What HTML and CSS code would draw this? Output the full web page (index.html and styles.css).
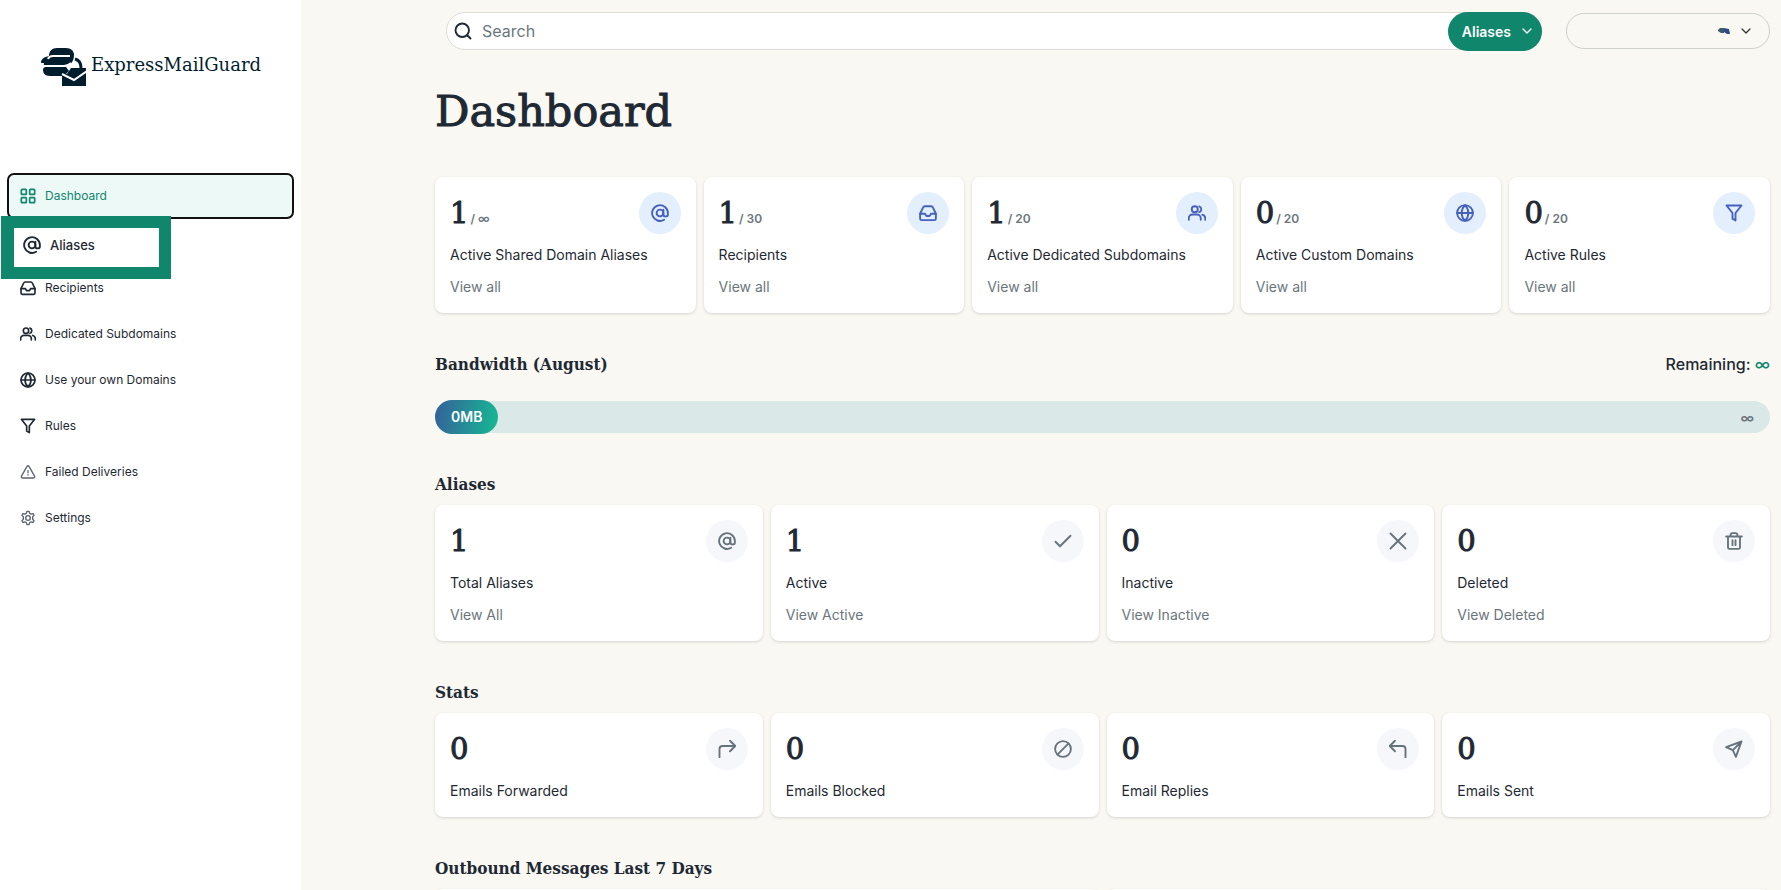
FILE: index.html
```html
<!DOCTYPE html>
<html lang="en">

<head>
    <meta charset="UTF-8">
    <title>Dashboard - ExpressMailGuard</title>
    <link rel="stylesheet" href="styles.css">
</head>

<body>
    <!-- Shared icons -->
    <svg class="sprite" aria-hidden="true">
        <symbol id="i-grid" viewBox="0 0 24 24">
            <rect x="2" y="2" width="7.5" height="7.5" rx="1" />
            <rect x="14.5" y="2" width="7.5" height="7.5" rx="1" />
            <rect x="2" y="14.5" width="7.5" height="7.5" rx="1" />
            <rect x="14.5" y="14.5" width="7.5" height="7.5" rx="1" />
        </symbol>
        <symbol id="i-at" viewBox="0 0 24 24">
            <circle cx="12" cy="12" r="4.5" />
            <path d="M16.5 7.5v6a3 3 0 0 0 6 0V12a10.5 10.5 0 1 0-5 9" />
        </symbol>
        <symbol id="i-inbox" viewBox="0 0 24 24">
            <path d="M22.5 13H16l-2 3h-4l-2-3H1.500" />
            <path d="M5.500 4.500L1.500 13v6.500a2 2 0 0 0 2 2h17a2 2 0 0 0 2-2V13l-4-8.500a2.500 2.500 0 0 0-2.200-1.500H7.700a2.500 2.500 0 0 0-2.200 1.500z" />
        </symbol>
        <symbol id="i-users" viewBox="0 0 24 24">
            <path d="M17 21v-2a5 5 0 0 0-5-5H6a5 5 0 0 0-5 5v2" />
            <circle cx="9" cy="7" r="4" />
            <path d="M23 21v-2a5 5 0 0 0-4-4.800M15 3.200a4 4 0 0 1 0 7.600" />
        </symbol>
        <symbol id="i-globe" viewBox="0 0 24 24">
            <circle cx="12" cy="12" r="10.500" />
            <path d="M1.500 12h21M12 1.500c-6 6-6 15 0 21c6-6 6-15 0-21z" />
        </symbol>
        <symbol id="i-filter" viewBox="0 0 24 24">
            <path d="M22 2H2l8 10v7.500l4 2.500V12z" />
        </symbol>
        <symbol id="i-alert" viewBox="0 0 24 24">
            <path d="M10.500 3.500L2 18.500a2 2 0 0 0 1.700 2.500h16.600a2 2 0 0 0 1.700-2.500L13.500 3.500a1.700 1.700 0 0 0-3 0zM12 10v3M12 16v.5" />
        </symbol>
        <symbol id="i-gear" viewBox="0 0 24 24">
            <path d="M9.600 4.800L10.400 2h3.200l.8 2.800 2.200 1.300 2.900-.8 1.600 2.800-2.100 2.100v3.600l2.100 2.100-1.600 2.800-2.900-.8-2.200 1.300-.8 2.800h-3.200l-.8-2.800-2.200-1.300-2.900.8-1.600-2.800L5 13.800v-3.600L2.900 8.100l1.600-2.800 2.900.8z" />
            <circle cx="12" cy="12" r="3.500" />
        </symbol>
        <symbol id="i-search" viewBox="0 0 24 24">
            <circle cx="11" cy="11" r="9" />
            <path d="M18 18l4 4" />
        </symbol>
        <symbol id="i-chevron" viewBox="0 0 24 24">
            <path d="M4 8l8 8 8-8" />
        </symbol>
        <symbol id="i-check" viewBox="0 0 24 24">
            <path d="M2 13l6 6L22 5" />
        </symbol>
        <symbol id="i-cross" viewBox="0 0 24 24">
            <path d="M2 2l20 20M22 2L2 22" />
        </symbol>
        <symbol id="i-trash" viewBox="0 0 24 24">
            <path d="M1.500 6h21M4 6v14.500a2 2 0 0 0 2 2h12a2 2 0 0 0 2-2V6M7.500 6V4a2.500 2.500 0 0 1 2.500-2.500h4A2.500 2.500 0 0 1 16.500 4v2M10 11v6.500M14 11v6.500" />
        </symbol>
        <symbol id="i-forward" viewBox="0 0 24 24">
            <path d="M16 1l7 7-7 7M23 8H6a4 4 0 0 0-4 4v11" />
        </symbol>
        <symbol id="i-blocked" viewBox="0 0 24 24">
            <circle cx="12" cy="12" r="10.500" />
            <path d="M19.400 4.600L4.600 19.400" />
        </symbol>
        <symbol id="i-reply" viewBox="0 0 24 24">
            <path d="M8 1L1 8l7 7M1 8h17a4 4 0 0 1 4 4v11" />
        </symbol>
        <symbol id="i-send" viewBox="0 0 24 24">
            <path d="M22 2L10.500 13.500M22 2l-7.500 20.500-4-9-9-4z" />
        </symbol>
    </svg>

    <aside class="sidebar">
        <a class="logo" href="#">
            <svg class="logo-mark" viewBox="0 0 46 38" aria-hidden="true">
                <path d="M8 8C8 3 11 0 16 0h9c5 0 8 3 8 7 0 7-4 11-10 11H6c-2 0-4-1-3-3H0c0-4 3-6 8-7z" />
                <path d="M5 19h20l3 4-5 5H9c-5 0-7-3-7-6 0-2 1-3 3-3z" />
                <path class="gap" d="M29 8H12c-4 0-5 3-5 3M3 18h20c3 0 5-1 7-3" />
                <path class="shackle" d="M34 11c4 1 6 4 6 9" />
                <path d="M30 20h15v18H21V26h5z" />
                <path class="gap" d="M21 26l12 6 13-9" />
            </svg>
            <span>ExpressMailGuard</span>
        </a>
        <nav class="menu">
            <a class="active" href="#"><svg class="icon"><use href="#i-grid" /></svg>Dashboard</a>
            <a class="marked" href="#"><svg class="icon"><use href="#i-at" /></svg>Aliases</a>
            <a href="#"><svg class="icon"><use href="#i-inbox" /></svg>Recipients</a>
            <a href="#"><svg class="icon"><use href="#i-users" /></svg>Dedicated Subdomains</a>
            <a href="#"><svg class="icon"><use href="#i-globe" /></svg>Use your own Domains</a>
            <a href="#"><svg class="icon"><use href="#i-filter" /></svg>Rules</a>
            <a href="#"><svg class="icon thin"><use href="#i-alert" /></svg>Failed Deliveries</a>
            <a href="#"><svg class="icon thin"><use href="#i-gear" /></svg>Settings</a>
        </nav>
    </aside>

    <main class="content">
        <header class="topbar">
            <form class="search">
                <svg class="icon"><use href="#i-search" /></svg>
                <input type="text" placeholder="Search" aria-label="Search">
                <button type="button" class="search-type">Aliases<svg class="icon"><use href="#i-chevron" /></svg></button>
            </form>
            <button type="button" class="account" aria-label="Account">
                <svg class="smudge" viewBox="0 0 12 8" aria-hidden="true">
                    <path d="M0 3l2-2h4v5H3L0 4z" fill="#3a5a70" />
                    <path d="M6 1l5 1 1 5H9L6 5z" fill="#2f4a86" />
                </svg>
                <svg class="icon"><use href="#i-chevron" /></svg>
            </button>
        </header>

        <h1>Dashboard</h1>

        <section class="cards five">
            <article class="card blue">
                <div class="card-top">
                    <p class="count">1<small>/ ∞</small></p>
                    <span class="badge"><svg class="icon"><use href="#i-at" /></svg></span>
                </div>
                <h3>Active Shared Domain Aliases</h3>
                <a href="#">View all</a>
            </article>
            <article class="card blue">
                <div class="card-top">
                    <p class="count">1<small>/ 30</small></p>
                    <span class="badge"><svg class="icon"><use href="#i-inbox" /></svg></span>
                </div>
                <h3>Recipients</h3>
                <a href="#">View all</a>
            </article>
            <article class="card blue">
                <div class="card-top">
                    <p class="count">1<small>/ 20</small></p>
                    <span class="badge"><svg class="icon"><use href="#i-users" /></svg></span>
                </div>
                <h3>Active Dedicated Subdomains</h3>
                <a href="#">View all</a>
            </article>
            <article class="card blue">
                <div class="card-top">
                    <p class="count">0<small>/ 20</small></p>
                    <span class="badge"><svg class="icon"><use href="#i-globe" /></svg></span>
                </div>
                <h3>Active Custom Domains</h3>
                <a href="#">View all</a>
            </article>
            <article class="card blue">
                <div class="card-top">
                    <p class="count">0<small>/ 20</small></p>
                    <span class="badge"><svg class="icon"><use href="#i-filter" /></svg></span>
                </div>
                <h3>Active Rules</h3>
                <a href="#">View all</a>
            </article>
        </section>

        <section class="bandwidth">
            <div class="bandwidth-head">
                <h2>Bandwidth (August)</h2>
                <p>Remaining: <span>∞</span></p>
            </div>
            <div class="bar">
                <span class="bar-fill">0MB</span>
                <span class="bar-limit">∞</span>
            </div>
        </section>

        <h2>Aliases</h2>
        <section class="cards four">
            <article class="card">
                <div class="card-top">
                    <p class="count">1</p>
                    <span class="badge"><svg class="icon"><use href="#i-at" /></svg></span>
                </div>
                <h3>Total Aliases</h3>
                <a href="#">View All</a>
            </article>
            <article class="card">
                <div class="card-top">
                    <p class="count">1</p>
                    <span class="badge"><svg class="icon"><use href="#i-check" /></svg></span>
                </div>
                <h3>Active</h3>
                <a href="#">View Active</a>
            </article>
            <article class="card">
                <div class="card-top">
                    <p class="count">0</p>
                    <span class="badge"><svg class="icon"><use href="#i-cross" /></svg></span>
                </div>
                <h3>Inactive</h3>
                <a href="#">View Inactive</a>
            </article>
            <article class="card">
                <div class="card-top">
                    <p class="count">0</p>
                    <span class="badge"><svg class="icon"><use href="#i-trash" /></svg></span>
                </div>
                <h3>Deleted</h3>
                <a href="#">View Deleted</a>
            </article>
        </section>

        <h2>Stats</h2>
        <section class="cards four">
            <article class="card">
                <div class="card-top">
                    <p class="count">0</p>
                    <span class="badge"><svg class="icon"><use href="#i-forward" /></svg></span>
                </div>
                <h3>Emails Forwarded</h3>
            </article>
            <article class="card">
                <div class="card-top">
                    <p class="count">0</p>
                    <span class="badge"><svg class="icon"><use href="#i-blocked" /></svg></span>
                </div>
                <h3>Emails Blocked</h3>
            </article>
            <article class="card">
                <div class="card-top">
                    <p class="count">0</p>
                    <span class="badge"><svg class="icon"><use href="#i-reply" /></svg></span>
                </div>
                <h3>Email Replies</h3>
            </article>
            <article class="card">
                <div class="card-top">
                    <p class="count">0</p>
                    <span class="badge"><svg class="icon"><use href="#i-send" /></svg></span>
                </div>
                <h3>Emails Sent</h3>
            </article>
        </section>

        <h2>Outbound Messages Last 7 Days</h2>
        <section class="cards two">
            <div class="card chart"></div>
            <div class="card chart"></div>
        </section>
    </main>
</body>

</html>
```

FILE: styles.css
```css
* {
    box-sizing: border-box;
}

body {
    display: flex;
    height: 100vh;
    margin: 0;
    overflow: hidden;
    background-color: #f9f8f3;
    color: #1f2933;
    font-family: Inter, "Liberation Sans", sans-serif;
    font-size: 14px;
}

h1,
h2,
h3,
p {
    margin: 0;
}

a {
    color: inherit;
    text-decoration: none;
}

button {
    font-family: inherit;
    cursor: pointer;
}

.sprite {
    position: absolute;
    width: 0;
    height: 0;
}

.icon {
    flex: none;
    width: 16px;
    height: 16px;
    fill: none;
    stroke: currentColor;
    stroke-width: 2.5;
    stroke-linecap: round;
    stroke-linejoin: round;
}

/* Sidebar */
.sidebar {
    flex: none;
    width: 301px;
    background-color: #fff;
}

.logo {
    display: flex;
    align-items: center;
    gap: 4px;
    height: 38px;
    margin: 48px 0 87px 41px;
    color: #001d2d;
    font-family: "DejaVu Serif", serif;
    font-size: 18px;
}

.logo span {
    padding-bottom: 5px;
}

.logo-mark {
    flex: none;
    width: 46px;
    height: 38px;
    fill: #001d2d;
}

.logo-mark .gap,
.logo-mark .shackle {
    fill: none;
    stroke: #fff;
    stroke-width: 2;
}

.logo-mark .shackle {
    stroke: #001d2d;
    stroke-width: 3;
}

.menu {
    display: flex;
    flex-direction: column;
    padding: 0 7px;
}

.menu a {
    display: flex;
    align-items: center;
    gap: 9px;
    height: 46px;
    padding: 0 13px 1px;
    font-size: 12px;
}

.menu .active {
    padding: 0 11px 1px;
    border: 2px solid #111;
    border-radius: 7px;
    background-color: #ecf9f7;
    color: #10866c;
}

/* Thick frame laid over the neighbouring menu items */
.menu .marked {
    position: relative;
    z-index: 1;
    width: 170px;
    height: 63px;
    margin: -3px 0 -14px -6px;
    padding: 0 9px 5px;
    border: 12px solid #10866c;
    border-left-width: 13px;
    background-color: #fff;
    font-size: 13px;
    font-weight: 500;
}

.menu .marked .icon {
    width: 18px;
    height: 18px;
}

.icon.thin {
    stroke-width: 2;
    color: #5a646b;
}

/* Content */
.content {
    flex: 1;
    min-width: 0;
    padding: 12px 11px 40px 134px;
    overflow-y: auto;
    scrollbar-width: none;
}

.topbar {
    display: flex;
    align-items: center;
    gap: 24px;
    height: 38px;
    padding-left: 11px;
}

.search {
    display: flex;
    align-items: center;
    flex: 1;
    height: 38px;
    padding-left: 7px;
    border: 1px solid #dddcd5;
    border-radius: 19px;
    background-color: #fff;
}

.search .icon {
    width: 18px;
    height: 18px;
}

.search input {
    flex: 1;
    min-width: 0;
    padding: 0 10px;
    border: 0;
    outline: 0;
    background: none;
    font-family: inherit;
    font-size: 16px;
}

.search input::placeholder {
    color: #6b767c;
}

.search-type {
    display: flex;
    align-items: center;
    gap: 10px;
    height: 39px;
    margin-right: -1px;
    padding: 0 9px 0 14px;
    border: 0;
    border-radius: 20px;
    background-color: #10866c;
    color: #fff;
    font-size: 14px;
    font-weight: 600;
}

.search .search-type .icon,
.account .icon {
    width: 12px;
    height: 12px;
}

.account {
    display: flex;
    align-items: center;
    justify-content: flex-end;
    gap: 10px;
    width: 204px;
    height: 36px;
    padding: 0 17px;
    border: 1px solid #cfd1cd;
    border-radius: 18px;
    background: none;
    color: #333;
}

.smudge {
    width: 12px;
    height: 8px;
}

/* The outline gives the serif a medium weight */
h1,
.count {
    font-family: "DejaVu Serif", serif;
    font-weight: 400;
    -webkit-text-stroke: 1px currentColor;
}

h1 {
    margin: 31px 0 36px;
    font-size: 43px;
    line-height: 60px;
}

h2 {
    margin-top: 38px;
    font-family: "DejaVu Serif Condensed", "DejaVu Serif", serif;
    font-size: 17px;
    font-weight: 700;
    line-height: 26px;
}

h2 + .cards {
    margin-top: 8px;
}

.cards {
    display: grid;
    gap: 8px;
}

.five {
    grid-template-columns: repeat(5, 1fr);
}

.four {
    grid-template-columns: repeat(4, 1fr);
}

.two {
    grid-template-columns: repeat(2, 1fr);
}

.card {
    padding: 15px 15px 16px;
    border-radius: 8px;
    background-color: #fff;
    box-shadow: 0 1px 3px rgba(0, 0, 0, 0.15);
}

.card-top {
    display: flex;
    justify-content: space-between;
    height: 42px;
}

.count {
    display: flex;
    align-items: baseline;
    gap: 2px;
    padding-top: 3px;
    font-size: 29px;
    line-height: 36px;
}

.count small {
    color: #6b767c;
    font-family: Inter, sans-serif;
    font-size: 12px;
    font-weight: 600;
    line-height: 16px;
    -webkit-text-stroke: 0;
}

.badge {
    display: flex;
    align-items: center;
    justify-content: center;
    width: 42px;
    height: 42px;
    border-radius: 50%;
    background-color: #f5f7fa;
    color: #66737c;
}

.badge .icon {
    width: 18px;
    height: 18px;
}

.blue .badge {
    background-color: #e3effd;
    color: #4560bd;
}

.card h3 {
    margin-top: 11px;
    font-size: 14px;
    font-weight: 400;
    line-height: 20px;
}

.card a {
    display: block;
    margin-top: 12px;
    color: #6b767c;
    line-height: 20px;
}

.chart {
    height: 300px;
}

/* Bandwidth */
.bandwidth-head {
    display: flex;
    align-items: center;
    justify-content: space-between;
    margin-top: 38px;
}

.bandwidth-head h2 {
    margin: 0;
}

.bandwidth-head p {
    font-size: 16px;
    font-weight: 500;
}

.bandwidth-head p span {
    color: #10866c;
}

.bar {
    display: flex;
    align-items: center;
    justify-content: space-between;
    height: 32px;
    margin-top: 24px;
    padding-right: 16px;
    border-radius: 16px;
    background-color: #dae8e7;
}

.bar-fill {
    padding: 0 16px;
    border-radius: 17px;
    background: linear-gradient(100deg, #35609a, #15ba93);
    color: #fff;
    font-weight: 600;
    line-height: 34px;
}

.bar-limit {
    color: #6b767c;
    font-weight: 600;
}
```
